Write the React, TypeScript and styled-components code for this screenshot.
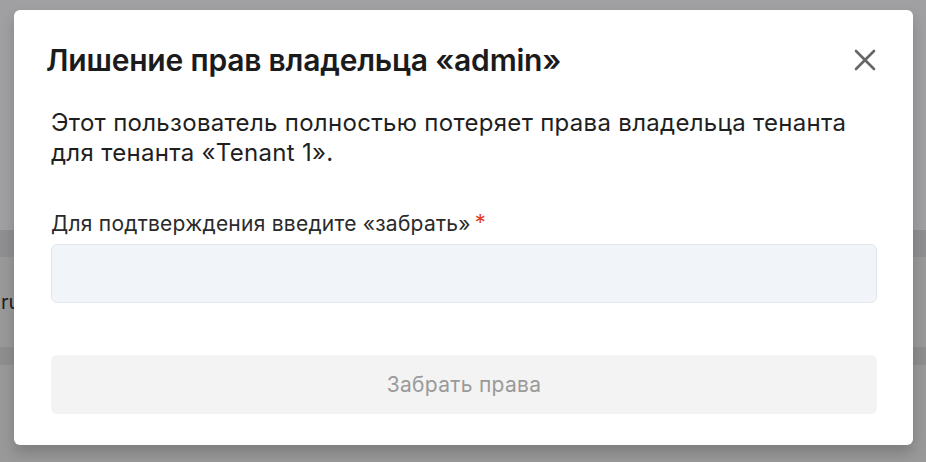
import styled, { createGlobalStyle } from 'styled-components';

const GlobalStyle = createGlobalStyle`
  html, body {
    margin: 0;
    padding: 0;
    width: 926px;
    height: 462px;
    overflow: hidden;
    font-family: Inter, "Noto Sans", "Liberation Sans", sans-serif;
  }
`;

const Page = styled.div`
  position: relative;
  width: 926px;
  height: 462px;
  display: flex;
  flex-direction: column;
  background: #a0a0a3;
`;

const Band = styled.div<{ $h: number; $bg: string }>`
  height: ${(p) => p.$h}px;
  flex-shrink: 0;
  background: ${(p) => p.$bg};
  display: flex;
  align-items: center;
`;

const BackText = styled.span`
  margin-left: 1px;
  font-size: 20px;
  color: #1f1f1f;
`;

const Modal = styled.div`
  position: absolute;
  left: 14px;
  top: 10px;
  width: 899px;
  height: 435px;
  box-sizing: border-box;
  background: #ffffff;
  border-radius: 6px;
  box-shadow: 0 8px 14px rgba(0, 0, 0, 0.18);
  padding: 32px 36px 31px 37px;
  display: flex;
  flex-direction: column;
`;

const Header = styled.div`
  display: flex;
  align-items: center;
  justify-content: space-between;
  margin-left: -5px;
  height: 36px;
`;

const Title = styled.h2`
  margin: 0;
  font-size: 30px;
  font-weight: 600;
  color: #1b1b1b;
  letter-spacing: -0.2px;
`;

const CloseButton = styled.button`
  border: 0;
  background: none;
  padding: 0;
  width: 26px;
  height: 26px;
  margin-right: -1px;
  display: flex;
  align-items: center;
  justify-content: center;
  cursor: pointer;
`;

const Description = styled.p`
  margin: 30px 0 0;
  font-size: 24px;
  line-height: 30px;
  letter-spacing: 0.3px;
  color: #1f1f1f;
`;

const Label = styled.label`
  margin-top: 43px;
  font-size: 21px;
  line-height: 26px;
  letter-spacing: 0.24px;
  color: #2a2a2a;
  display: flex;
  align-items: flex-start;
`;

const Required = styled.span`
  color: #e2401f;
  margin-left: 4px;
  font-size: 22px;
  line-height: 22px;
`;

const Input = styled.input`
  margin-top: 7px;
  height: 59px;
  box-sizing: border-box;
  width: 100%;
  background: #f1f4f9;
  border: 1px solid #e3e6ec;
  border-radius: 6px;
  outline: none;
  font: inherit;
  font-size: 20px;
  padding: 0 16px;
`;

const SubmitButton = styled.button`
  margin-top: 52px;
  height: 59px;
  width: 100%;
  border: 0;
  border-radius: 6px;
  background: #f3f3f3;
  color: #9a9a9a;
  font-family: inherit;
  font-size: 21px;
  letter-spacing: 0.3px;
  cursor: not-allowed;
`;

export default function App() {
  return (
    <>
      <GlobalStyle />
      <Page>
        <Band $h={230} $bg="#a0a0a3" />
        <Band $h={27} $bg="#8f8f92" />
        <Band $h={90} $bg="#999999">
          <BackText>ru</BackText>
        </Band>
        <Band $h={18} $bg="#8e8e8f" />
        <Band $h={97} $bg="#999999" />
        <Modal role="dialog" aria-modal="true">
          <Header>
            <Title>Лишение прав владельца «admin»</Title>
            <CloseButton aria-label="Закрыть">
              <svg width="22" height="22" viewBox="0 0 22 22" fill="none">
                <path d="M2 2L20 20M20 2L2 20" stroke="#666666" strokeWidth="2.6" strokeLinecap="round" />
              </svg>
            </CloseButton>
          </Header>
          <Description>
            Этот пользователь полностью потеряет права владельца тенанта для тенанта «Tenant 1».
          </Description>
          <Label>
            Для подтверждения введите «забрать»<Required>*</Required>
          </Label>
          <Input type="text" />
          <SubmitButton disabled>Забрать права</SubmitButton>
        </Modal>
      </Page>
    </>
  );
}
